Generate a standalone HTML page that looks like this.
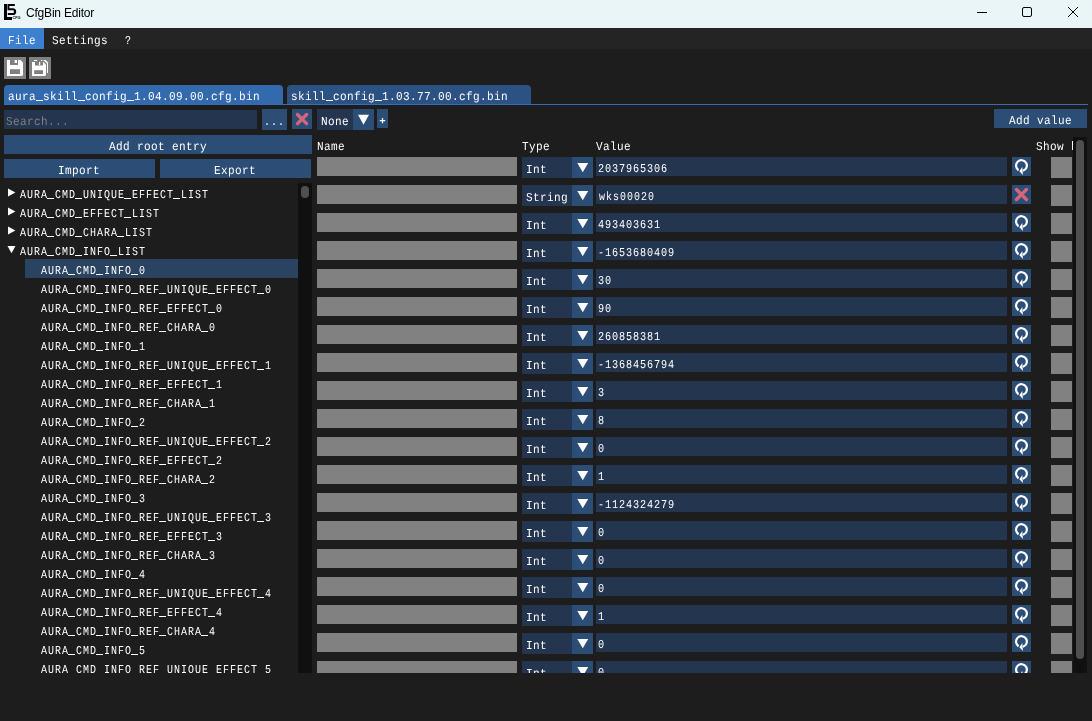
<!DOCTYPE html>
<html><head><meta charset="utf-8"><title>CfgBin Editor</title>
<style>
html,body{margin:0;padding:0;}
body{width:1092px;height:721px;position:relative;overflow:hidden;background:#1d1d1d;font-family:"Liberation Mono",monospace;}
div,span,svg{position:absolute;}
.clip{overflow:hidden;}
.ov{pointer-events:none;}
.t{font:12px/16px "Liberation Mono",monospace;color:#fff;white-space:pre;text-rendering:geometricPrecision;transform-origin:0 0;}
.tt{font:12px/16px "Liberation Sans",sans-serif;color:#000;white-space:pre;letter-spacing:-0.2px;}
</style></head><body><div id="root" style="left:0;top:0;width:1092px;height:721px;will-change:transform;">
<div style="left:0px;top:0px;width:1092px;height:28px;background:#e9f5f6;"></div>
<svg style="left:4px;top:4px" width="17" height="17" viewBox="0 0 17 17"><rect x="0" y="0" width="3" height="16" fill="#000"/><rect x="0" y="13" width="8" height="3" fill="#000"/><path d="M3.5 0H10.8V2.1H5.4V4.3H8.8C11.2 4.3 12.2 5.8 12.2 7.7C12.2 9.8 11 11.1 8.8 11.1H3.8V9H8.4C9.5 9 10 8.5 10 7.7C10 6.9 9.5 6.3 8.4 6.3H3.5Z" fill="#000"/><text x="8.4" y="14.9" font-family="Liberation Sans" font-weight="bold" font-size="3.9" fill="#000">CFG</text></svg>
<span class="tt" style="left:26px;top:5px">CfgBin Editor</span>
<svg style="left:970px;top:0px" width="122" height="28" viewBox="0 0 122 28"><path d="M7 12.5H17" stroke="#000" stroke-width="1" fill="none"/><rect x="52.5" y="7.5" width="9" height="9" rx="1.5" stroke="#000" stroke-width="1" fill="none"/><path d="M98 7L108 17M108 7L98 17" stroke="#000" stroke-width="1" fill="none"/></svg>
<div style="left:0px;top:28px;width:1092px;height:21px;background:#242424;"></div>
<div style="left:0px;top:28px;width:44px;height:21px;background:#3c80cf;"></div>
<span class="t" style="left:8.19px;top:33px;letter-spacing:0.409px;transform:scaleX(0.92);">File</span>
<span class="t" style="left:52.19px;top:33px;letter-spacing:0.409px;transform:scaleX(0.92);">Settings</span>
<span class="t" style="left:124.51px;top:33px;letter-spacing:1.234px;transform:scaleX(0.83);">?</span>
<div style="left:4px;top:57px;width:22px;height:22px;background:#808080;"></div>
<div style="left:29px;top:57px;width:22px;height:22px;background:#808080;"></div>
<svg style="left:7px;top:60px" width="16" height="16" viewBox="0 0 16 16"><path d="M0 0H13.5L16 2.5V15L15 16H0Z" fill="#fff"/><rect x="3" y="0" width="8" height="5" fill="#808080"/><rect x="7.6" y="0" width="2.4" height="3" fill="#fff"/><rect x="3" y="9.2" width="10" height="4.8" fill="#808080"/></svg>
<svg style="left:32px;top:60px" width="16" height="16" viewBox="0 0 16 16"><path d="M2 0H5V1H2ZM9 0H10.2V1H9ZM11.5 0H13.6L16 2.6V13H15V3.4L12.4 1H11.5Z" fill="#fff"/><path d="M0 2H11.6L14 4.4V15L13 16H0Z" fill="#fff"/><rect x="3" y="2" width="8" height="3.5" fill="#808080"/><rect x="7" y="2" width="1.2" height="3" fill="#fff"/><rect x="2.2" y="10.2" width="8.8" height="3.8" fill="#808080"/></svg>
<div style="left:4px;top:85px;width:279px;height:19px;background:#3369ad;border-radius:4px 4px 0 0;"></div>
<div style="left:287px;top:85px;width:244px;height:19px;background:#2c5183;border-radius:4px 4px 0 0;"></div>
<div style="left:4px;top:104px;width:1084px;height:1px;background:#366db4;"></div>
<div style="left:36px;top:100px;width:7px;height:1px;background:#fff;"></div>
<div style="left:78px;top:100px;width:7px;height:1px;background:#fff;"></div>
<div style="left:127px;top:100px;width:7px;height:1px;background:#fff;"></div>
<span class="t" style="left:8.19px;top:89px;letter-spacing:0.409px;transform:scaleX(0.92);">aura skill config 1.04.09.00.cfg.bin</span>
<div style="left:326px;top:100px;width:7px;height:1px;background:#fff;"></div>
<div style="left:375px;top:100px;width:7px;height:1px;background:#fff;"></div>
<span class="t" style="left:291.19px;top:89px;letter-spacing:0.409px;transform:scaleX(0.92);">skill config 1.03.77.00.cfg.bin</span>
<div style="left:4px;top:110px;width:253px;height:19px;background:#23354f;"></div>
<span class="t" style="left:6.19px;top:114px;letter-spacing:0.409px;transform:scaleX(0.92);color:#808080;">Search...</span>
<div style="left:262px;top:109px;width:25px;height:21px;background:#2c4e76;"></div>
<span class="t" style="left:263.51px;top:114px;letter-spacing:1.234px;transform:scaleX(0.83);">...</span>
<div style="left:292px;top:109px;width:20px;height:20px;background:#2c4e76;"></div>
<svg style="left:292px;top:109px" width="20" height="20" viewBox="0 0 20 20"><path d="M5.5 5.5L14.6 14.6M14.6 5.5L5.5 14.6" stroke="#d4667c" stroke-width="3.4" stroke-linecap="round"/></svg>
<div style="left:317px;top:109px;width:36px;height:21px;background:#23354f;"></div>
<div style="left:353px;top:109px;width:21px;height:21px;background:#2c4e76;"></div>
<span class="t" style="left:321.19px;top:114px;letter-spacing:0.409px;transform:scaleX(0.92);">None</span>
<svg style="left:0;top:0" width="1092" height="721" class="ov"><polygon points="358.0,114.75 369.0,114.75 363.5,124.75" fill="#fff"/></svg>
<div style="left:377px;top:109px;width:11px;height:19px;background:#2c4e76;"></div>
<svg style="left:377px;top:109px" width="11" height="19" viewBox="0 0 11 19"><path d="M2.8 11.6H8.2M5.5 9V14.2" stroke="#fff" stroke-width="1.3"/></svg>
<div style="left:994px;top:109px;width:93px;height:19px;background:#2c4e76;"></div>
<span class="t" style="left:1009.19px;top:113px;letter-spacing:0.409px;transform:scaleX(0.92);">Add value</span>
<div style="left:4px;top:135px;width:308px;height:19px;background:#2c4e76;"></div>
<span class="t" style="left:109.19px;top:139px;letter-spacing:0.409px;transform:scaleX(0.92);">Add root entry</span>
<div style="left:4px;top:159px;width:151px;height:19px;background:#2c4e76;"></div>
<span class="t" style="left:58.19px;top:163px;letter-spacing:0.409px;transform:scaleX(0.92);">Import</span>
<div style="left:160px;top:159px;width:151px;height:19px;background:#2c4e76;"></div>
<span class="t" style="left:214.19px;top:163px;letter-spacing:0.409px;transform:scaleX(0.92);">Export</span>
<div class="clip" style="left:4px;top:183px;width:308px;height:490px">
<div style="left:21px;top:76px;width:273px;height:19px;background:#294361;"></div>
<div style="left:43px;top:15px;width:7px;height:1px;background:#fff;"></div>
<div style="left:71px;top:15px;width:7px;height:1px;background:#fff;"></div>
<div style="left:120px;top:15px;width:7px;height:1px;background:#fff;"></div>
<div style="left:169px;top:15px;width:7px;height:1px;background:#fff;"></div>
<span class="t" style="left:15.51px;top:4px;letter-spacing:1.234px;transform:scaleX(0.83);">AURA CMD UNIQUE EFFECT LIST</span>
<svg style="left:0;top:0" width="308" height="490" class="ov"><polygon points="4,5.599999999999994 11.4,9.5 4,13.400000000000006" fill="#fff"/></svg>
<div style="left:43px;top:34px;width:7px;height:1px;background:#fff;"></div>
<div style="left:71px;top:34px;width:7px;height:1px;background:#fff;"></div>
<div style="left:120px;top:34px;width:7px;height:1px;background:#fff;"></div>
<span class="t" style="left:15.51px;top:23px;letter-spacing:1.234px;transform:scaleX(0.83);">AURA CMD EFFECT LIST</span>
<svg style="left:0;top:0" width="308" height="490" class="ov"><polygon points="4,24.599999999999994 11.4,28.5 4,32.400000000000006" fill="#fff"/></svg>
<div style="left:43px;top:53px;width:7px;height:1px;background:#fff;"></div>
<div style="left:71px;top:53px;width:7px;height:1px;background:#fff;"></div>
<div style="left:113px;top:53px;width:7px;height:1px;background:#fff;"></div>
<span class="t" style="left:15.51px;top:42px;letter-spacing:1.234px;transform:scaleX(0.83);">AURA CMD CHARA LIST</span>
<svg style="left:0;top:0" width="308" height="490" class="ov"><polygon points="4,43.599999999999994 11.4,47.5 4,51.400000000000006" fill="#fff"/></svg>
<div style="left:43px;top:72px;width:7px;height:1px;background:#fff;"></div>
<div style="left:71px;top:72px;width:7px;height:1px;background:#fff;"></div>
<div style="left:106px;top:72px;width:7px;height:1px;background:#fff;"></div>
<span class="t" style="left:15.51px;top:61px;letter-spacing:1.234px;transform:scaleX(0.83);">AURA CMD INFO LIST</span>
<svg style="left:0;top:0" width="308" height="490" class="ov"><polygon points="3.5,63 11.5,63 7.5,70.19999999999999" fill="#fff"/></svg>
<div style="left:64px;top:91px;width:7px;height:1px;background:#fff;"></div>
<div style="left:92px;top:91px;width:7px;height:1px;background:#fff;"></div>
<div style="left:127px;top:91px;width:7px;height:1px;background:#fff;"></div>
<span class="t" style="left:36.51px;top:80px;letter-spacing:1.234px;transform:scaleX(0.83);">AURA CMD INFO 0</span>
<div style="left:64px;top:110px;width:7px;height:1px;background:#fff;"></div>
<div style="left:92px;top:110px;width:7px;height:1px;background:#fff;"></div>
<div style="left:127px;top:110px;width:7px;height:1px;background:#fff;"></div>
<div style="left:155px;top:110px;width:7px;height:1px;background:#fff;"></div>
<div style="left:204px;top:110px;width:7px;height:1px;background:#fff;"></div>
<div style="left:253px;top:110px;width:7px;height:1px;background:#fff;"></div>
<span class="t" style="left:36.51px;top:99px;letter-spacing:1.234px;transform:scaleX(0.83);">AURA CMD INFO REF UNIQUE EFFECT 0</span>
<div style="left:64px;top:129px;width:7px;height:1px;background:#fff;"></div>
<div style="left:92px;top:129px;width:7px;height:1px;background:#fff;"></div>
<div style="left:127px;top:129px;width:7px;height:1px;background:#fff;"></div>
<div style="left:155px;top:129px;width:7px;height:1px;background:#fff;"></div>
<div style="left:204px;top:129px;width:7px;height:1px;background:#fff;"></div>
<span class="t" style="left:36.51px;top:118px;letter-spacing:1.234px;transform:scaleX(0.83);">AURA CMD INFO REF EFFECT 0</span>
<div style="left:64px;top:148px;width:7px;height:1px;background:#fff;"></div>
<div style="left:92px;top:148px;width:7px;height:1px;background:#fff;"></div>
<div style="left:127px;top:148px;width:7px;height:1px;background:#fff;"></div>
<div style="left:155px;top:148px;width:7px;height:1px;background:#fff;"></div>
<div style="left:197px;top:148px;width:7px;height:1px;background:#fff;"></div>
<span class="t" style="left:36.51px;top:137px;letter-spacing:1.234px;transform:scaleX(0.83);">AURA CMD INFO REF CHARA 0</span>
<div style="left:64px;top:167px;width:7px;height:1px;background:#fff;"></div>
<div style="left:92px;top:167px;width:7px;height:1px;background:#fff;"></div>
<div style="left:127px;top:167px;width:7px;height:1px;background:#fff;"></div>
<span class="t" style="left:36.51px;top:156px;letter-spacing:1.234px;transform:scaleX(0.83);">AURA CMD INFO 1</span>
<div style="left:64px;top:186px;width:7px;height:1px;background:#fff;"></div>
<div style="left:92px;top:186px;width:7px;height:1px;background:#fff;"></div>
<div style="left:127px;top:186px;width:7px;height:1px;background:#fff;"></div>
<div style="left:155px;top:186px;width:7px;height:1px;background:#fff;"></div>
<div style="left:204px;top:186px;width:7px;height:1px;background:#fff;"></div>
<div style="left:253px;top:186px;width:7px;height:1px;background:#fff;"></div>
<span class="t" style="left:36.51px;top:175px;letter-spacing:1.234px;transform:scaleX(0.83);">AURA CMD INFO REF UNIQUE EFFECT 1</span>
<div style="left:64px;top:205px;width:7px;height:1px;background:#fff;"></div>
<div style="left:92px;top:205px;width:7px;height:1px;background:#fff;"></div>
<div style="left:127px;top:205px;width:7px;height:1px;background:#fff;"></div>
<div style="left:155px;top:205px;width:7px;height:1px;background:#fff;"></div>
<div style="left:204px;top:205px;width:7px;height:1px;background:#fff;"></div>
<span class="t" style="left:36.51px;top:194px;letter-spacing:1.234px;transform:scaleX(0.83);">AURA CMD INFO REF EFFECT 1</span>
<div style="left:64px;top:224px;width:7px;height:1px;background:#fff;"></div>
<div style="left:92px;top:224px;width:7px;height:1px;background:#fff;"></div>
<div style="left:127px;top:224px;width:7px;height:1px;background:#fff;"></div>
<div style="left:155px;top:224px;width:7px;height:1px;background:#fff;"></div>
<div style="left:197px;top:224px;width:7px;height:1px;background:#fff;"></div>
<span class="t" style="left:36.51px;top:213px;letter-spacing:1.234px;transform:scaleX(0.83);">AURA CMD INFO REF CHARA 1</span>
<div style="left:64px;top:243px;width:7px;height:1px;background:#fff;"></div>
<div style="left:92px;top:243px;width:7px;height:1px;background:#fff;"></div>
<div style="left:127px;top:243px;width:7px;height:1px;background:#fff;"></div>
<span class="t" style="left:36.51px;top:232px;letter-spacing:1.234px;transform:scaleX(0.83);">AURA CMD INFO 2</span>
<div style="left:64px;top:262px;width:7px;height:1px;background:#fff;"></div>
<div style="left:92px;top:262px;width:7px;height:1px;background:#fff;"></div>
<div style="left:127px;top:262px;width:7px;height:1px;background:#fff;"></div>
<div style="left:155px;top:262px;width:7px;height:1px;background:#fff;"></div>
<div style="left:204px;top:262px;width:7px;height:1px;background:#fff;"></div>
<div style="left:253px;top:262px;width:7px;height:1px;background:#fff;"></div>
<span class="t" style="left:36.51px;top:251px;letter-spacing:1.234px;transform:scaleX(0.83);">AURA CMD INFO REF UNIQUE EFFECT 2</span>
<div style="left:64px;top:281px;width:7px;height:1px;background:#fff;"></div>
<div style="left:92px;top:281px;width:7px;height:1px;background:#fff;"></div>
<div style="left:127px;top:281px;width:7px;height:1px;background:#fff;"></div>
<div style="left:155px;top:281px;width:7px;height:1px;background:#fff;"></div>
<div style="left:204px;top:281px;width:7px;height:1px;background:#fff;"></div>
<span class="t" style="left:36.51px;top:270px;letter-spacing:1.234px;transform:scaleX(0.83);">AURA CMD INFO REF EFFECT 2</span>
<div style="left:64px;top:300px;width:7px;height:1px;background:#fff;"></div>
<div style="left:92px;top:300px;width:7px;height:1px;background:#fff;"></div>
<div style="left:127px;top:300px;width:7px;height:1px;background:#fff;"></div>
<div style="left:155px;top:300px;width:7px;height:1px;background:#fff;"></div>
<div style="left:197px;top:300px;width:7px;height:1px;background:#fff;"></div>
<span class="t" style="left:36.51px;top:289px;letter-spacing:1.234px;transform:scaleX(0.83);">AURA CMD INFO REF CHARA 2</span>
<div style="left:64px;top:319px;width:7px;height:1px;background:#fff;"></div>
<div style="left:92px;top:319px;width:7px;height:1px;background:#fff;"></div>
<div style="left:127px;top:319px;width:7px;height:1px;background:#fff;"></div>
<span class="t" style="left:36.51px;top:308px;letter-spacing:1.234px;transform:scaleX(0.83);">AURA CMD INFO 3</span>
<div style="left:64px;top:338px;width:7px;height:1px;background:#fff;"></div>
<div style="left:92px;top:338px;width:7px;height:1px;background:#fff;"></div>
<div style="left:127px;top:338px;width:7px;height:1px;background:#fff;"></div>
<div style="left:155px;top:338px;width:7px;height:1px;background:#fff;"></div>
<div style="left:204px;top:338px;width:7px;height:1px;background:#fff;"></div>
<div style="left:253px;top:338px;width:7px;height:1px;background:#fff;"></div>
<span class="t" style="left:36.51px;top:327px;letter-spacing:1.234px;transform:scaleX(0.83);">AURA CMD INFO REF UNIQUE EFFECT 3</span>
<div style="left:64px;top:357px;width:7px;height:1px;background:#fff;"></div>
<div style="left:92px;top:357px;width:7px;height:1px;background:#fff;"></div>
<div style="left:127px;top:357px;width:7px;height:1px;background:#fff;"></div>
<div style="left:155px;top:357px;width:7px;height:1px;background:#fff;"></div>
<div style="left:204px;top:357px;width:7px;height:1px;background:#fff;"></div>
<span class="t" style="left:36.51px;top:346px;letter-spacing:1.234px;transform:scaleX(0.83);">AURA CMD INFO REF EFFECT 3</span>
<div style="left:64px;top:376px;width:7px;height:1px;background:#fff;"></div>
<div style="left:92px;top:376px;width:7px;height:1px;background:#fff;"></div>
<div style="left:127px;top:376px;width:7px;height:1px;background:#fff;"></div>
<div style="left:155px;top:376px;width:7px;height:1px;background:#fff;"></div>
<div style="left:197px;top:376px;width:7px;height:1px;background:#fff;"></div>
<span class="t" style="left:36.51px;top:365px;letter-spacing:1.234px;transform:scaleX(0.83);">AURA CMD INFO REF CHARA 3</span>
<div style="left:64px;top:395px;width:7px;height:1px;background:#fff;"></div>
<div style="left:92px;top:395px;width:7px;height:1px;background:#fff;"></div>
<div style="left:127px;top:395px;width:7px;height:1px;background:#fff;"></div>
<span class="t" style="left:36.51px;top:384px;letter-spacing:1.234px;transform:scaleX(0.83);">AURA CMD INFO 4</span>
<div style="left:64px;top:414px;width:7px;height:1px;background:#fff;"></div>
<div style="left:92px;top:414px;width:7px;height:1px;background:#fff;"></div>
<div style="left:127px;top:414px;width:7px;height:1px;background:#fff;"></div>
<div style="left:155px;top:414px;width:7px;height:1px;background:#fff;"></div>
<div style="left:204px;top:414px;width:7px;height:1px;background:#fff;"></div>
<div style="left:253px;top:414px;width:7px;height:1px;background:#fff;"></div>
<span class="t" style="left:36.51px;top:403px;letter-spacing:1.234px;transform:scaleX(0.83);">AURA CMD INFO REF UNIQUE EFFECT 4</span>
<div style="left:64px;top:433px;width:7px;height:1px;background:#fff;"></div>
<div style="left:92px;top:433px;width:7px;height:1px;background:#fff;"></div>
<div style="left:127px;top:433px;width:7px;height:1px;background:#fff;"></div>
<div style="left:155px;top:433px;width:7px;height:1px;background:#fff;"></div>
<div style="left:204px;top:433px;width:7px;height:1px;background:#fff;"></div>
<span class="t" style="left:36.51px;top:422px;letter-spacing:1.234px;transform:scaleX(0.83);">AURA CMD INFO REF EFFECT 4</span>
<div style="left:64px;top:452px;width:7px;height:1px;background:#fff;"></div>
<div style="left:92px;top:452px;width:7px;height:1px;background:#fff;"></div>
<div style="left:127px;top:452px;width:7px;height:1px;background:#fff;"></div>
<div style="left:155px;top:452px;width:7px;height:1px;background:#fff;"></div>
<div style="left:197px;top:452px;width:7px;height:1px;background:#fff;"></div>
<span class="t" style="left:36.51px;top:441px;letter-spacing:1.234px;transform:scaleX(0.83);">AURA CMD INFO REF CHARA 4</span>
<div style="left:64px;top:471px;width:7px;height:1px;background:#fff;"></div>
<div style="left:92px;top:471px;width:7px;height:1px;background:#fff;"></div>
<div style="left:127px;top:471px;width:7px;height:1px;background:#fff;"></div>
<span class="t" style="left:36.51px;top:460px;letter-spacing:1.234px;transform:scaleX(0.83);">AURA CMD INFO 5</span>
<div style="left:64px;top:490px;width:7px;height:1px;background:#fff;"></div>
<div style="left:92px;top:490px;width:7px;height:1px;background:#fff;"></div>
<div style="left:127px;top:490px;width:7px;height:1px;background:#fff;"></div>
<div style="left:155px;top:490px;width:7px;height:1px;background:#fff;"></div>
<div style="left:204px;top:490px;width:7px;height:1px;background:#fff;"></div>
<div style="left:253px;top:490px;width:7px;height:1px;background:#fff;"></div>
<span class="t" style="left:36.51px;top:479px;letter-spacing:1.234px;transform:scaleX(0.83);">AURA CMD INFO REF UNIQUE EFFECT 5</span>
<div style="left:294px;top:0px;width:14px;height:490px;background:#101010;"></div>
<div style="left:297px;top:3px;width:8px;height:12px;background:#4f4f4f;border-radius:4px;"></div>
</div>
<div class="clip" style="left:317px;top:137px;width:770px;height:536px">
<span class="t" style="left:0.19px;top:2px;letter-spacing:0.409px;transform:scaleX(0.92);">Name</span>
<span class="t" style="left:205.19px;top:2px;letter-spacing:0.409px;transform:scaleX(0.92);">Type</span>
<span class="t" style="left:279.19px;top:2px;letter-spacing:0.409px;transform:scaleX(0.92);">Value</span>
<span class="t" style="left:719.19px;top:2px;letter-spacing:0.409px;transform:scaleX(0.92);">Show</span>
<div style="left:754.5px;top:4px;width:1.5px;height:9px;background:#fff;"></div>
<div style="left:0px;top:20px;width:200px;height:19px;background:#818181;"></div>
<div style="left:205px;top:20px;width:50px;height:21px;background:#23354f;"></div>
<div style="left:255px;top:20px;width:21px;height:21px;background:#2c4e76;"></div>
<span class="t" style="left:209.19px;top:25px;letter-spacing:0.409px;transform:scaleX(0.92);">Int</span>
<svg style="left:0;top:0" width="770" height="536" class="ov"><polygon points="260.29999999999995,26 271.20000000000005,26 265.75,35.2" fill="#fff"/></svg>
<div style="left:279px;top:20px;width:411px;height:19px;background:#23354f;"></div>
<span class="t" style="left:281.44px;top:24px;letter-spacing:1.035px;transform:scaleX(0.85);">2037965306</span>
<div style="left:695px;top:20px;width:19px;height:19px;background:#2c4e76;"></div>
<svg style="left:695px;top:20px" width="19" height="19" viewBox="0 0 19 19"><path d="M6.6 13.2A5.4 5.4 0 1 1 10.9 13.8" stroke="#fff" stroke-width="2.2" fill="none"/><polygon points="7.4,14.2 10.3,10.0 10.9,17.9" fill="#fff"/></svg>
<div style="left:734px;top:20px;width:21px;height:21px;background:#818181;"></div>
<div style="left:0px;top:48px;width:200px;height:19px;background:#818181;"></div>
<div style="left:205px;top:48px;width:50px;height:21px;background:#23354f;"></div>
<div style="left:255px;top:48px;width:21px;height:21px;background:#2c4e76;"></div>
<span class="t" style="left:209.19px;top:53px;letter-spacing:0.409px;transform:scaleX(0.92);">String</span>
<svg style="left:0;top:0" width="770" height="536" class="ov"><polygon points="260.29999999999995,54 271.20000000000005,54 265.75,63.2" fill="#fff"/></svg>
<div style="left:279px;top:48px;width:411px;height:19px;background:#23354f;"></div>
<span class="t" style="left:281.51px;top:52px;letter-spacing:1.234px;transform:scaleX(0.83);">wks00020</span>
<div style="left:695px;top:48px;width:19px;height:19px;background:#2c4e76;"></div>
<svg style="left:695px;top:48px" width="19" height="19" viewBox="0 0 19 19"><path d="M4.5 4.5L14.45 14.45M14.45 4.5L4.5 14.45" stroke="#d4667c" stroke-width="3.4" stroke-linecap="round"/></svg>
<div style="left:734px;top:48px;width:21px;height:21px;background:#818181;"></div>
<div style="left:0px;top:76px;width:200px;height:19px;background:#818181;"></div>
<div style="left:205px;top:76px;width:50px;height:21px;background:#23354f;"></div>
<div style="left:255px;top:76px;width:21px;height:21px;background:#2c4e76;"></div>
<span class="t" style="left:209.19px;top:81px;letter-spacing:0.409px;transform:scaleX(0.92);">Int</span>
<svg style="left:0;top:0" width="770" height="536" class="ov"><polygon points="260.29999999999995,82 271.20000000000005,82 265.75,91.2" fill="#fff"/></svg>
<div style="left:279px;top:76px;width:411px;height:19px;background:#23354f;"></div>
<span class="t" style="left:281.44px;top:80px;letter-spacing:1.035px;transform:scaleX(0.85);">493403631</span>
<div style="left:695px;top:76px;width:19px;height:19px;background:#2c4e76;"></div>
<svg style="left:695px;top:76px" width="19" height="19" viewBox="0 0 19 19"><path d="M6.6 13.2A5.4 5.4 0 1 1 10.9 13.8" stroke="#fff" stroke-width="2.2" fill="none"/><polygon points="7.4,14.2 10.3,10.0 10.9,17.9" fill="#fff"/></svg>
<div style="left:734px;top:76px;width:21px;height:21px;background:#818181;"></div>
<div style="left:0px;top:104px;width:200px;height:19px;background:#818181;"></div>
<div style="left:205px;top:104px;width:50px;height:21px;background:#23354f;"></div>
<div style="left:255px;top:104px;width:21px;height:21px;background:#2c4e76;"></div>
<span class="t" style="left:209.19px;top:109px;letter-spacing:0.409px;transform:scaleX(0.92);">Int</span>
<svg style="left:0;top:0" width="770" height="536" class="ov"><polygon points="260.29999999999995,110 271.20000000000005,110 265.75,119.2" fill="#fff"/></svg>
<div style="left:279px;top:104px;width:411px;height:19px;background:#23354f;"></div>
<span class="t" style="left:281.44px;top:108px;letter-spacing:1.035px;transform:scaleX(0.85);">-1653680409</span>
<div style="left:695px;top:104px;width:19px;height:19px;background:#2c4e76;"></div>
<svg style="left:695px;top:104px" width="19" height="19" viewBox="0 0 19 19"><path d="M6.6 13.2A5.4 5.4 0 1 1 10.9 13.8" stroke="#fff" stroke-width="2.2" fill="none"/><polygon points="7.4,14.2 10.3,10.0 10.9,17.9" fill="#fff"/></svg>
<div style="left:734px;top:104px;width:21px;height:21px;background:#818181;"></div>
<div style="left:0px;top:132px;width:200px;height:19px;background:#818181;"></div>
<div style="left:205px;top:132px;width:50px;height:21px;background:#23354f;"></div>
<div style="left:255px;top:132px;width:21px;height:21px;background:#2c4e76;"></div>
<span class="t" style="left:209.19px;top:137px;letter-spacing:0.409px;transform:scaleX(0.92);">Int</span>
<svg style="left:0;top:0" width="770" height="536" class="ov"><polygon points="260.29999999999995,138 271.20000000000005,138 265.75,147.2" fill="#fff"/></svg>
<div style="left:279px;top:132px;width:411px;height:19px;background:#23354f;"></div>
<span class="t" style="left:281.44px;top:136px;letter-spacing:1.035px;transform:scaleX(0.85);">30</span>
<div style="left:695px;top:132px;width:19px;height:19px;background:#2c4e76;"></div>
<svg style="left:695px;top:132px" width="19" height="19" viewBox="0 0 19 19"><path d="M6.6 13.2A5.4 5.4 0 1 1 10.9 13.8" stroke="#fff" stroke-width="2.2" fill="none"/><polygon points="7.4,14.2 10.3,10.0 10.9,17.9" fill="#fff"/></svg>
<div style="left:734px;top:132px;width:21px;height:21px;background:#818181;"></div>
<div style="left:0px;top:160px;width:200px;height:19px;background:#818181;"></div>
<div style="left:205px;top:160px;width:50px;height:21px;background:#23354f;"></div>
<div style="left:255px;top:160px;width:21px;height:21px;background:#2c4e76;"></div>
<span class="t" style="left:209.19px;top:165px;letter-spacing:0.409px;transform:scaleX(0.92);">Int</span>
<svg style="left:0;top:0" width="770" height="536" class="ov"><polygon points="260.29999999999995,166 271.20000000000005,166 265.75,175.2" fill="#fff"/></svg>
<div style="left:279px;top:160px;width:411px;height:19px;background:#23354f;"></div>
<span class="t" style="left:281.44px;top:164px;letter-spacing:1.035px;transform:scaleX(0.85);">90</span>
<div style="left:695px;top:160px;width:19px;height:19px;background:#2c4e76;"></div>
<svg style="left:695px;top:160px" width="19" height="19" viewBox="0 0 19 19"><path d="M6.6 13.2A5.4 5.4 0 1 1 10.9 13.8" stroke="#fff" stroke-width="2.2" fill="none"/><polygon points="7.4,14.2 10.3,10.0 10.9,17.9" fill="#fff"/></svg>
<div style="left:734px;top:160px;width:21px;height:21px;background:#818181;"></div>
<div style="left:0px;top:188px;width:200px;height:19px;background:#818181;"></div>
<div style="left:205px;top:188px;width:50px;height:21px;background:#23354f;"></div>
<div style="left:255px;top:188px;width:21px;height:21px;background:#2c4e76;"></div>
<span class="t" style="left:209.19px;top:193px;letter-spacing:0.409px;transform:scaleX(0.92);">Int</span>
<svg style="left:0;top:0" width="770" height="536" class="ov"><polygon points="260.29999999999995,194 271.20000000000005,194 265.75,203.2" fill="#fff"/></svg>
<div style="left:279px;top:188px;width:411px;height:19px;background:#23354f;"></div>
<span class="t" style="left:281.44px;top:192px;letter-spacing:1.035px;transform:scaleX(0.85);">260858381</span>
<div style="left:695px;top:188px;width:19px;height:19px;background:#2c4e76;"></div>
<svg style="left:695px;top:188px" width="19" height="19" viewBox="0 0 19 19"><path d="M6.6 13.2A5.4 5.4 0 1 1 10.9 13.8" stroke="#fff" stroke-width="2.2" fill="none"/><polygon points="7.4,14.2 10.3,10.0 10.9,17.9" fill="#fff"/></svg>
<div style="left:734px;top:188px;width:21px;height:21px;background:#818181;"></div>
<div style="left:0px;top:216px;width:200px;height:19px;background:#818181;"></div>
<div style="left:205px;top:216px;width:50px;height:21px;background:#23354f;"></div>
<div style="left:255px;top:216px;width:21px;height:21px;background:#2c4e76;"></div>
<span class="t" style="left:209.19px;top:221px;letter-spacing:0.409px;transform:scaleX(0.92);">Int</span>
<svg style="left:0;top:0" width="770" height="536" class="ov"><polygon points="260.29999999999995,222 271.20000000000005,222 265.75,231.2" fill="#fff"/></svg>
<div style="left:279px;top:216px;width:411px;height:19px;background:#23354f;"></div>
<span class="t" style="left:281.44px;top:220px;letter-spacing:1.035px;transform:scaleX(0.85);">-1368456794</span>
<div style="left:695px;top:216px;width:19px;height:19px;background:#2c4e76;"></div>
<svg style="left:695px;top:216px" width="19" height="19" viewBox="0 0 19 19"><path d="M6.6 13.2A5.4 5.4 0 1 1 10.9 13.8" stroke="#fff" stroke-width="2.2" fill="none"/><polygon points="7.4,14.2 10.3,10.0 10.9,17.9" fill="#fff"/></svg>
<div style="left:734px;top:216px;width:21px;height:21px;background:#818181;"></div>
<div style="left:0px;top:244px;width:200px;height:19px;background:#818181;"></div>
<div style="left:205px;top:244px;width:50px;height:21px;background:#23354f;"></div>
<div style="left:255px;top:244px;width:21px;height:21px;background:#2c4e76;"></div>
<span class="t" style="left:209.19px;top:249px;letter-spacing:0.409px;transform:scaleX(0.92);">Int</span>
<svg style="left:0;top:0" width="770" height="536" class="ov"><polygon points="260.29999999999995,250 271.20000000000005,250 265.75,259.2" fill="#fff"/></svg>
<div style="left:279px;top:244px;width:411px;height:19px;background:#23354f;"></div>
<span class="t" style="left:281.44px;top:248px;letter-spacing:1.035px;transform:scaleX(0.85);">3</span>
<div style="left:695px;top:244px;width:19px;height:19px;background:#2c4e76;"></div>
<svg style="left:695px;top:244px" width="19" height="19" viewBox="0 0 19 19"><path d="M6.6 13.2A5.4 5.4 0 1 1 10.9 13.8" stroke="#fff" stroke-width="2.2" fill="none"/><polygon points="7.4,14.2 10.3,10.0 10.9,17.9" fill="#fff"/></svg>
<div style="left:734px;top:244px;width:21px;height:21px;background:#818181;"></div>
<div style="left:0px;top:272px;width:200px;height:19px;background:#818181;"></div>
<div style="left:205px;top:272px;width:50px;height:21px;background:#23354f;"></div>
<div style="left:255px;top:272px;width:21px;height:21px;background:#2c4e76;"></div>
<span class="t" style="left:209.19px;top:277px;letter-spacing:0.409px;transform:scaleX(0.92);">Int</span>
<svg style="left:0;top:0" width="770" height="536" class="ov"><polygon points="260.29999999999995,278 271.20000000000005,278 265.75,287.2" fill="#fff"/></svg>
<div style="left:279px;top:272px;width:411px;height:19px;background:#23354f;"></div>
<span class="t" style="left:281.44px;top:276px;letter-spacing:1.035px;transform:scaleX(0.85);">8</span>
<div style="left:695px;top:272px;width:19px;height:19px;background:#2c4e76;"></div>
<svg style="left:695px;top:272px" width="19" height="19" viewBox="0 0 19 19"><path d="M6.6 13.2A5.4 5.4 0 1 1 10.9 13.8" stroke="#fff" stroke-width="2.2" fill="none"/><polygon points="7.4,14.2 10.3,10.0 10.9,17.9" fill="#fff"/></svg>
<div style="left:734px;top:272px;width:21px;height:21px;background:#818181;"></div>
<div style="left:0px;top:300px;width:200px;height:19px;background:#818181;"></div>
<div style="left:205px;top:300px;width:50px;height:21px;background:#23354f;"></div>
<div style="left:255px;top:300px;width:21px;height:21px;background:#2c4e76;"></div>
<span class="t" style="left:209.19px;top:305px;letter-spacing:0.409px;transform:scaleX(0.92);">Int</span>
<svg style="left:0;top:0" width="770" height="536" class="ov"><polygon points="260.29999999999995,306 271.20000000000005,306 265.75,315.2" fill="#fff"/></svg>
<div style="left:279px;top:300px;width:411px;height:19px;background:#23354f;"></div>
<span class="t" style="left:281.44px;top:304px;letter-spacing:1.035px;transform:scaleX(0.85);">0</span>
<div style="left:695px;top:300px;width:19px;height:19px;background:#2c4e76;"></div>
<svg style="left:695px;top:300px" width="19" height="19" viewBox="0 0 19 19"><path d="M6.6 13.2A5.4 5.4 0 1 1 10.9 13.8" stroke="#fff" stroke-width="2.2" fill="none"/><polygon points="7.4,14.2 10.3,10.0 10.9,17.9" fill="#fff"/></svg>
<div style="left:734px;top:300px;width:21px;height:21px;background:#818181;"></div>
<div style="left:0px;top:328px;width:200px;height:19px;background:#818181;"></div>
<div style="left:205px;top:328px;width:50px;height:21px;background:#23354f;"></div>
<div style="left:255px;top:328px;width:21px;height:21px;background:#2c4e76;"></div>
<span class="t" style="left:209.19px;top:333px;letter-spacing:0.409px;transform:scaleX(0.92);">Int</span>
<svg style="left:0;top:0" width="770" height="536" class="ov"><polygon points="260.29999999999995,334 271.20000000000005,334 265.75,343.2" fill="#fff"/></svg>
<div style="left:279px;top:328px;width:411px;height:19px;background:#23354f;"></div>
<span class="t" style="left:281.44px;top:332px;letter-spacing:1.035px;transform:scaleX(0.85);">1</span>
<div style="left:695px;top:328px;width:19px;height:19px;background:#2c4e76;"></div>
<svg style="left:695px;top:328px" width="19" height="19" viewBox="0 0 19 19"><path d="M6.6 13.2A5.4 5.4 0 1 1 10.9 13.8" stroke="#fff" stroke-width="2.2" fill="none"/><polygon points="7.4,14.2 10.3,10.0 10.9,17.9" fill="#fff"/></svg>
<div style="left:734px;top:328px;width:21px;height:21px;background:#818181;"></div>
<div style="left:0px;top:356px;width:200px;height:19px;background:#818181;"></div>
<div style="left:205px;top:356px;width:50px;height:21px;background:#23354f;"></div>
<div style="left:255px;top:356px;width:21px;height:21px;background:#2c4e76;"></div>
<span class="t" style="left:209.19px;top:361px;letter-spacing:0.409px;transform:scaleX(0.92);">Int</span>
<svg style="left:0;top:0" width="770" height="536" class="ov"><polygon points="260.29999999999995,362 271.20000000000005,362 265.75,371.2" fill="#fff"/></svg>
<div style="left:279px;top:356px;width:411px;height:19px;background:#23354f;"></div>
<span class="t" style="left:281.44px;top:360px;letter-spacing:1.035px;transform:scaleX(0.85);">-1124324279</span>
<div style="left:695px;top:356px;width:19px;height:19px;background:#2c4e76;"></div>
<svg style="left:695px;top:356px" width="19" height="19" viewBox="0 0 19 19"><path d="M6.6 13.2A5.4 5.4 0 1 1 10.9 13.8" stroke="#fff" stroke-width="2.2" fill="none"/><polygon points="7.4,14.2 10.3,10.0 10.9,17.9" fill="#fff"/></svg>
<div style="left:734px;top:356px;width:21px;height:21px;background:#818181;"></div>
<div style="left:0px;top:384px;width:200px;height:19px;background:#818181;"></div>
<div style="left:205px;top:384px;width:50px;height:21px;background:#23354f;"></div>
<div style="left:255px;top:384px;width:21px;height:21px;background:#2c4e76;"></div>
<span class="t" style="left:209.19px;top:389px;letter-spacing:0.409px;transform:scaleX(0.92);">Int</span>
<svg style="left:0;top:0" width="770" height="536" class="ov"><polygon points="260.29999999999995,390 271.20000000000005,390 265.75,399.2" fill="#fff"/></svg>
<div style="left:279px;top:384px;width:411px;height:19px;background:#23354f;"></div>
<span class="t" style="left:281.44px;top:388px;letter-spacing:1.035px;transform:scaleX(0.85);">0</span>
<div style="left:695px;top:384px;width:19px;height:19px;background:#2c4e76;"></div>
<svg style="left:695px;top:384px" width="19" height="19" viewBox="0 0 19 19"><path d="M6.6 13.2A5.4 5.4 0 1 1 10.9 13.8" stroke="#fff" stroke-width="2.2" fill="none"/><polygon points="7.4,14.2 10.3,10.0 10.9,17.9" fill="#fff"/></svg>
<div style="left:734px;top:384px;width:21px;height:21px;background:#818181;"></div>
<div style="left:0px;top:412px;width:200px;height:19px;background:#818181;"></div>
<div style="left:205px;top:412px;width:50px;height:21px;background:#23354f;"></div>
<div style="left:255px;top:412px;width:21px;height:21px;background:#2c4e76;"></div>
<span class="t" style="left:209.19px;top:417px;letter-spacing:0.409px;transform:scaleX(0.92);">Int</span>
<svg style="left:0;top:0" width="770" height="536" class="ov"><polygon points="260.29999999999995,418 271.20000000000005,418 265.75,427.2" fill="#fff"/></svg>
<div style="left:279px;top:412px;width:411px;height:19px;background:#23354f;"></div>
<span class="t" style="left:281.44px;top:416px;letter-spacing:1.035px;transform:scaleX(0.85);">0</span>
<div style="left:695px;top:412px;width:19px;height:19px;background:#2c4e76;"></div>
<svg style="left:695px;top:412px" width="19" height="19" viewBox="0 0 19 19"><path d="M6.6 13.2A5.4 5.4 0 1 1 10.9 13.8" stroke="#fff" stroke-width="2.2" fill="none"/><polygon points="7.4,14.2 10.3,10.0 10.9,17.9" fill="#fff"/></svg>
<div style="left:734px;top:412px;width:21px;height:21px;background:#818181;"></div>
<div style="left:0px;top:440px;width:200px;height:19px;background:#818181;"></div>
<div style="left:205px;top:440px;width:50px;height:21px;background:#23354f;"></div>
<div style="left:255px;top:440px;width:21px;height:21px;background:#2c4e76;"></div>
<span class="t" style="left:209.19px;top:445px;letter-spacing:0.409px;transform:scaleX(0.92);">Int</span>
<svg style="left:0;top:0" width="770" height="536" class="ov"><polygon points="260.29999999999995,446 271.20000000000005,446 265.75,455.2" fill="#fff"/></svg>
<div style="left:279px;top:440px;width:411px;height:19px;background:#23354f;"></div>
<span class="t" style="left:281.44px;top:444px;letter-spacing:1.035px;transform:scaleX(0.85);">0</span>
<div style="left:695px;top:440px;width:19px;height:19px;background:#2c4e76;"></div>
<svg style="left:695px;top:440px" width="19" height="19" viewBox="0 0 19 19"><path d="M6.6 13.2A5.4 5.4 0 1 1 10.9 13.8" stroke="#fff" stroke-width="2.2" fill="none"/><polygon points="7.4,14.2 10.3,10.0 10.9,17.9" fill="#fff"/></svg>
<div style="left:734px;top:440px;width:21px;height:21px;background:#818181;"></div>
<div style="left:0px;top:468px;width:200px;height:19px;background:#818181;"></div>
<div style="left:205px;top:468px;width:50px;height:21px;background:#23354f;"></div>
<div style="left:255px;top:468px;width:21px;height:21px;background:#2c4e76;"></div>
<span class="t" style="left:209.19px;top:473px;letter-spacing:0.409px;transform:scaleX(0.92);">Int</span>
<svg style="left:0;top:0" width="770" height="536" class="ov"><polygon points="260.29999999999995,474 271.20000000000005,474 265.75,483.2" fill="#fff"/></svg>
<div style="left:279px;top:468px;width:411px;height:19px;background:#23354f;"></div>
<span class="t" style="left:281.44px;top:472px;letter-spacing:1.035px;transform:scaleX(0.85);">1</span>
<div style="left:695px;top:468px;width:19px;height:19px;background:#2c4e76;"></div>
<svg style="left:695px;top:468px" width="19" height="19" viewBox="0 0 19 19"><path d="M6.6 13.2A5.4 5.4 0 1 1 10.9 13.8" stroke="#fff" stroke-width="2.2" fill="none"/><polygon points="7.4,14.2 10.3,10.0 10.9,17.9" fill="#fff"/></svg>
<div style="left:734px;top:468px;width:21px;height:21px;background:#818181;"></div>
<div style="left:0px;top:496px;width:200px;height:19px;background:#818181;"></div>
<div style="left:205px;top:496px;width:50px;height:21px;background:#23354f;"></div>
<div style="left:255px;top:496px;width:21px;height:21px;background:#2c4e76;"></div>
<span class="t" style="left:209.19px;top:501px;letter-spacing:0.409px;transform:scaleX(0.92);">Int</span>
<svg style="left:0;top:0" width="770" height="536" class="ov"><polygon points="260.29999999999995,502 271.20000000000005,502 265.75,511.2" fill="#fff"/></svg>
<div style="left:279px;top:496px;width:411px;height:19px;background:#23354f;"></div>
<span class="t" style="left:281.44px;top:500px;letter-spacing:1.035px;transform:scaleX(0.85);">0</span>
<div style="left:695px;top:496px;width:19px;height:19px;background:#2c4e76;"></div>
<svg style="left:695px;top:496px" width="19" height="19" viewBox="0 0 19 19"><path d="M6.6 13.2A5.4 5.4 0 1 1 10.9 13.8" stroke="#fff" stroke-width="2.2" fill="none"/><polygon points="7.4,14.2 10.3,10.0 10.9,17.9" fill="#fff"/></svg>
<div style="left:734px;top:496px;width:21px;height:21px;background:#818181;"></div>
<div style="left:0px;top:524px;width:200px;height:19px;background:#818181;"></div>
<div style="left:205px;top:524px;width:50px;height:21px;background:#23354f;"></div>
<div style="left:255px;top:524px;width:21px;height:21px;background:#2c4e76;"></div>
<span class="t" style="left:209.19px;top:529px;letter-spacing:0.409px;transform:scaleX(0.92);">Int</span>
<svg style="left:0;top:0" width="770" height="536" class="ov"><polygon points="260.29999999999995,530 271.20000000000005,530 265.75,539.2" fill="#fff"/></svg>
<div style="left:279px;top:524px;width:411px;height:19px;background:#23354f;"></div>
<span class="t" style="left:281.44px;top:528px;letter-spacing:1.035px;transform:scaleX(0.85);">0</span>
<div style="left:695px;top:524px;width:19px;height:19px;background:#2c4e76;"></div>
<svg style="left:695px;top:524px" width="19" height="19" viewBox="0 0 19 19"><path d="M6.6 13.2A5.4 5.4 0 1 1 10.9 13.8" stroke="#fff" stroke-width="2.2" fill="none"/><polygon points="7.4,14.2 10.3,10.0 10.9,17.9" fill="#fff"/></svg>
<div style="left:734px;top:524px;width:21px;height:21px;background:#818181;"></div>
<div style="left:756px;top:0px;width:14px;height:536px;background:#101010;"></div>
<div style="left:759px;top:3px;width:8px;height:519px;background:#4f4f4f;border-radius:4px;"></div>
</div>
</div></body></html>
